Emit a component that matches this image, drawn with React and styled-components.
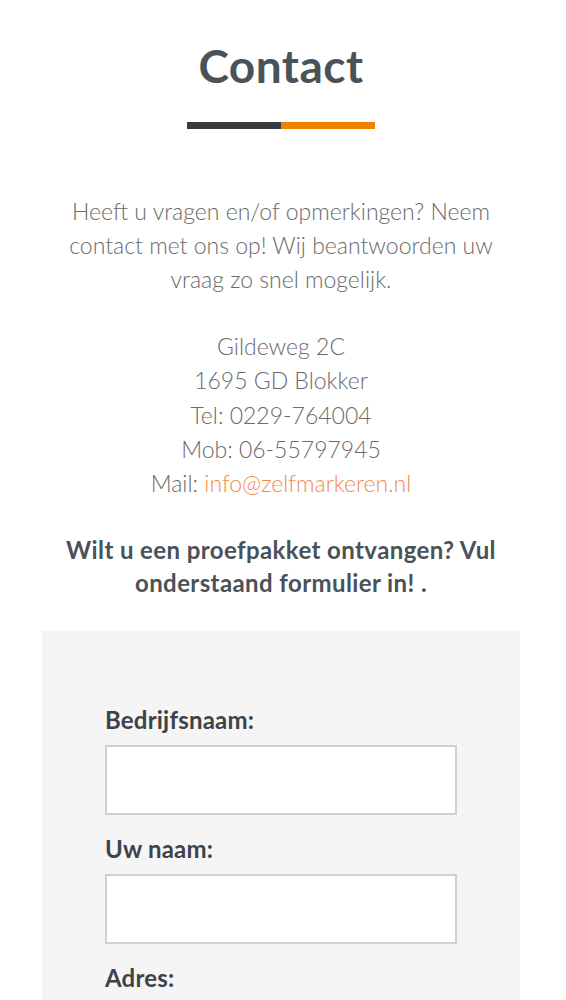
import React from "react";
import styled, { createGlobalStyle } from "styled-components";

const Global = createGlobalStyle`
  body {
    margin: 0;
    background: #fff;
    font-family: Lato, "Open Sans", sans-serif;
  }
`;

function App() {
  return (
    <Page>
      <Global />
      <Title>Contact</Title>
      <Divider>
        <span />
        <span />
      </Divider>
      <Intro>
        Heeft u vragen en/of opmerkingen? Neem contact met ons op! Wij beantwoorden uw vraag zo snel
        mogelijk.
      </Intro>
      <Address>
        Gildeweg 2C
        <br />
        1695 GD Blokker
        <br />
        Tel: 0229-764004
        <br />
        Mob: 06-55797945
        <br />
        Mail: <a href="#">info@zelfmarkeren.nl</a>
      </Address>
      <Question>Wilt u een proefpakket ontvangen? Vul onderstaand formulier in! .</Question>
      <FormBox>
        <Label>Bedrijfsnaam:</Label>
        <Input type="text" />
        <Label>Uw naam:</Label>
        <Input type="text" />
        <Label>Adres:</Label>
        <Input type="text" />
      </FormBox>
    </Page>
  );
}

const Page = styled.div`
  display: flex;
  flex-direction: column;
  align-items: center;
  padding: 38px 4px 0 0;
`;

const Title = styled.h1`
  margin: 0;
  font-size: 46px;
  line-height: 56px;
  font-weight: 700;
  letter-spacing: 0.5px;
  color: #4a5259;
`;

const Divider = styled.div`
  display: flex;
  width: 188px;
  margin-top: 28px;
  span {
    flex: 1;
    height: 7px;
    background: #363b40;
  }
  span + span {
    background: #f08000;
  }
`;

const Intro = styled.p`
  width: 440px;
  margin: 65px 0 0;
  text-align: center;
  font-size: 23px;
  line-height: 34px;
  font-weight: 300;
  color: #6a6a6a;
`;

const Address = styled.p`
  margin: 33px 0 0;
  text-align: center;
  font-size: 23px;
  line-height: 34.3px;
  font-weight: 300;
  color: #6a6a6a;
  a {
    color: #f5894a;
    text-decoration: none;
  }
`;

const Question = styled.p`
  width: 450px;
  margin: 33px 0 0;
  text-align: center;
  font-size: 24px;
  line-height: 33px;
  font-weight: 700;
  letter-spacing: 0.4px;
  color: #4a5259;
`;

const FormBox = styled.div`
  box-sizing: border-box;
  width: 478px;
  margin-top: 32px;
  padding: 74px 63px 40px;
  background: #f5f5f5;
  display: flex;
  flex-direction: column;
`;

const Label = styled.label`
  font-size: 24px;
  line-height: 30px;
  font-weight: 700;
  letter-spacing: 0.2px;
  color: #3d4349;
  margin-bottom: 10px;
`;

const Input = styled.input`
  box-sizing: border-box;
  width: 100%;
  height: 70px;
  margin-bottom: 19px;
  border: 2px solid #d0d0d0;
  background: #fff;
`;

export default App;
